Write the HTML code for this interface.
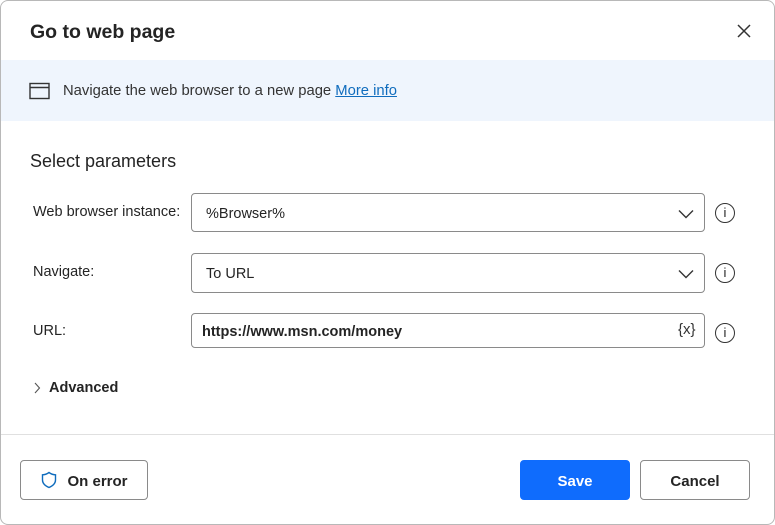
<!DOCTYPE html>
<html><head><style>
*{box-sizing:border-box;margin:0;padding:0}
body{width:775px;height:525px;background:#fff;font-family:"Liberation Sans",sans-serif;color:#242424;position:relative;overflow:hidden}
.dlg{position:absolute;left:0;top:0;width:775px;height:525px;border:1px solid #b8b8b8;border-radius:8px}
.abs{position:absolute}
.title{left:30px;top:21px;font-size:19.5px;font-weight:bold;color:#242424}
.banner{left:1px;top:60px;width:773px;height:61px;background:#eff5fd}
.btxt{left:63px;top:83px;font-size:14.8px;color:#333}
.btxt a{color:#0f6cbd;text-decoration:underline}
.sec{left:30px;top:151px;font-size:18px;color:#242424}
.lbl{left:33px;font-size:14.5px;color:#242424}
.fld{left:191px;width:514px;border:1px solid #8a8a8a;border-radius:4px;background:#fff;font-size:14.5px;padding-left:14px;padding-top:2px;display:flex;align-items:center}
.info{left:715px;width:20px;height:20px;border:1.3px solid #333;border-radius:50%;font-size:13px;text-align:center;line-height:18px}
.btn{top:460px;height:40px;border:1px solid #8a8a8a;border-radius:4px;font-size:15px;font-weight:bold;display:flex;align-items:center;justify-content:center;padding-top:2px}
</style></head><body>
<div class="abs banner"></div>
<div class="abs title">Go to web page</div>
<svg class="abs" style="left:736px;top:23px" width="16" height="16"><path d="M2 2L14 14M14 2L2 14" stroke="#333" stroke-width="1.5"/></svg>
<svg class="abs" style="left:29px;top:82px" width="22" height="18"><rect x="1" y="1.5" width="19" height="15" fill="none" stroke="#333" stroke-width="1.4"/><line x1="1" y1="5.5" x2="20" y2="5.5" stroke="#333" stroke-width="1.4"/></svg>
<div class="abs btxt">Navigate the web browser to a new page <a>More info</a></div>
<div class="abs sec">Select parameters</div>
<div class="abs lbl" style="top:204px">Web browser instance:</div>
<div class="abs fld" style="top:193px;height:39px">%Browser%</div>
<div class="abs lbl" style="top:264px">Navigate:</div>
<div class="abs fld" style="top:253px;height:40px">To URL</div>
<div class="abs lbl" style="top:323px">URL:</div>
<div class="abs fld" style="top:313px;height:35px;font-weight:bold;padding-left:10px">https://www.msn.com/money</div>
<div class="abs" style="left:678px;top:321px;font-size:15px;color:#333">{x}</div>
<svg class="abs" style="left:678px;top:209px" width="16" height="10"><path d="M1 1.5L8 8.5L15 1.5" fill="none" stroke="#333" stroke-width="1.4"/></svg>
<svg class="abs" style="left:678px;top:269px" width="16" height="10"><path d="M1 1.5L8 8.5L15 1.5" fill="none" stroke="#333" stroke-width="1.4"/></svg>
<div class="abs info" style="top:203px">i</div>
<div class="abs info" style="top:263px">i</div>
<div class="abs info" style="top:323px">i</div>
<svg class="abs" style="left:33px;top:382px" width="8" height="12"><path d="M2 1L6.5 6L2 11" fill="none" stroke="#555" stroke-width="1.1"/></svg>
<div class="abs" style="left:49px;top:380px;font-size:14.5px;font-weight:bold">Advanced</div>
<div class="abs" style="left:0;top:434px;width:775px;height:1px;background:#e0e0e0"></div>
<div class="abs btn" style="left:20px;width:128px"><svg width="18" height="18" style="margin-right:9px;margin-top:-2px"><path d="M9 1.5C6.5 3.3 4.5 3.8 2.5 3.8V9C2.5 12.5 5.5 15 9 16.5C12.5 15 15.5 12.5 15.5 9V3.8C13.5 3.8 11.5 3.3 9 1.5Z" fill="none" stroke="#0f6cbd" stroke-width="1.4"/></svg>On error</div>
<div class="abs btn" style="left:520px;width:110px;background:#0f6cfd;border-color:#0f6cfd;color:#fff">Save</div>
<div class="abs btn" style="left:640px;width:110px">Cancel</div>
<div class="dlg"></div>
</body></html>
